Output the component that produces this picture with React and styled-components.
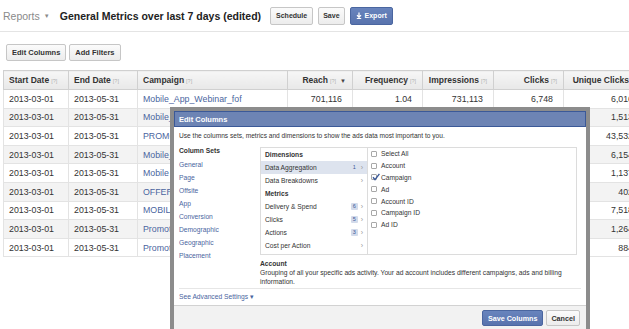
import React from 'react';
import styled, { createGlobalStyle } from 'styled-components';

const GlobalStyle = createGlobalStyle`
  html, body {
    margin: 0;
    padding: 0;
    background: #fff;
    overflow: hidden;
  }
  body {
    font-family: "Liberation Sans", Arial, sans-serif;
    color: #333;
  }
`;

const Page = styled.div`
  position: relative;
  width: 629px;
  height: 329px;
  overflow: hidden;
`;

const TopBar = styled.div`
  display: flex;
  align-items: center;
  height: 31px;
  padding-left: 3px;
  border-bottom: 1px solid #e4e4e4;
`;

const Reports = styled.span`
  font-size: 10.5px;
  color: #8a8a8a;
`;

const Caret = styled.span`
  font-size: 6px;
  color: #8a8a8a;
  margin-left: 4px;
`;

const Title = styled.h1`
  margin: 0 0 0 10px;
  font-size: 10.5px;
  font-weight: bold;
  color: #222;
`;

const Actions = styled.div`
  display: flex;
  gap: 5px;
  margin-left: 9px;
`;

const Button = styled.button`
  display: flex;
  align-items: center;
  gap: 3px;
  height: ${({ $h }) => $h || 18}px;
  padding: 0 ${({ $pad }) => $pad || 5}px;
  font-family: inherit;
  font-size: ${({ $size }) => $size || 7}px;
  font-weight: bold;
  border-radius: 2px;
  cursor: pointer;
  color: ${({ $primary }) => ($primary ? '#fff' : '#333')};
  border: 1px solid ${({ $primary }) => ($primary ? '#4a66a0' : '#c6c6c6')};
  background: ${({ $primary }) =>
    $primary
      ? 'linear-gradient(#6884bd, #5873ad)'
      : 'linear-gradient(#fbfbfb, #ececec)'};
`;

const Toolbar = styled.div`
  display: flex;
  gap: 3px;
  padding: 12px 0 0 6px;
`;

const Table = styled.table`
  margin: 9px 0 0 3px;
  width: 640px;
  table-layout: fixed;
  border-collapse: collapse;
`;

const Th = styled.th`
  height: 18px;
  padding: 0 ${({ $align }) => ($align === 'right' ? '6px' : '0')} 0
    ${({ $align }) => ($align === 'right' ? '0' : '5px')};
  font-size: 8.5px;
  font-weight: bold;
  color: #333;
  text-align: ${({ $align }) => $align || 'left'};
  white-space: nowrap;
  overflow: hidden;
  border: 1px solid #d0d0d0;
  background: linear-gradient(#f6f6f6, #e8e8e8);
`;

const Help = styled.span`
  font-size: 5.5px;
  font-weight: normal;
  color: #b0b0b0;
  margin-left: 2px;
`;

const Sort = styled.span`
  font-size: 6px;
  color: #444;
  margin-left: 4px;
`;

const Tr = styled.tr`
  background: ${({ $odd }) => ($odd ? '#f3f3f3' : '#fff')};
`;

const Td = styled.td`
  height: 17.6px;
  padding: 0 ${({ $align }) => ($align === 'right' ? '10px' : '0')} 0
    ${({ $align }) => ($align === 'right' ? '0' : '5px')};
  font-size: 8.8px;
  color: ${({ $link }) => ($link ? '#4a65a0' : '#333')};
  text-align: ${({ $align }) => $align || 'left'};
  white-space: nowrap;
  overflow: hidden;
  border: 1px solid #e3e3e3;
`;

const Dialog = styled.div`
  position: absolute;
  left: 170px;
  top: 107px;
  width: 420px;
  box-sizing: border-box;
  border: 4px solid rgba(70, 70, 70, 0.62);
  background: #fff;
  font-size: 6.7px;
  color: #333;
`;

const DialogHeader = styled.div`
  height: 16px;
  box-sizing: border-box;
  display: flex;
  align-items: center;
  padding-left: 4px;
  background: #6d84b4;
  border: 1px solid #3b5998;
  color: #fff;
  font-size: 7.5px;
  font-weight: bold;
`;

const DialogBody = styled.div`
  padding: 4px 5px 0 5px;
`;

const Intro = styled.p`
  margin: 0;
  line-height: 9px;
  font-size: 6.6px;
`;

const Columns = styled.div`
  display: grid;
  grid-template-columns: 81px 317px;
  margin-top: 7px;
`;

const SetsTitle = styled.div`
  font-weight: bold;
  line-height: 8px;
  margin-bottom: 3px;
`;

const SetLink = styled.div`
  line-height: 13px;
  color: #4a65a0;
`;

const Picker = styled.div`
  display: grid;
  grid-template-columns: 107px 1fr;
  height: 108px;
  box-sizing: border-box;
  border: 1px solid #dcdcdc;
`;

const MenuPane = styled.div`
  border-right: 1px solid #dcdcdc;
`;

const MenuRow = styled.div`
  display: flex;
  align-items: center;
  height: 13px;
  padding: 0 4px 0 4px;
  font-weight: ${({ $head }) => ($head ? 'bold' : 'normal')};
  background: ${({ $active }) => ($active ? '#dde3ee' : 'transparent')};
`;

const Badge = styled.span`
  margin-left: auto;
  min-width: 7px;
  height: 7px;
  line-height: 7px;
  text-align: center;
  font-size: 5.5px;
  border-radius: 1px;
  color: #3b5998;
  background: ${({ $plain }) => ($plain ? 'transparent' : '#d3dbeb')};
`;

const Chevron = styled.span`
  margin-left: ${({ $alone }) => ($alone ? 'auto' : '3px')};
  color: #999;
  font-size: 7px;
`;

const CheckPane = styled.div`
  padding-left: 3px;
`;

const CheckRow = styled.label`
  display: flex;
  align-items: center;
  height: 11.8px;
  gap: 4px;
`;

const Box = styled.span`
  position: relative;
  width: 6px;
  height: 6px;
  box-sizing: border-box;
  border: 1px solid #a8a8a8;
  border-radius: 1px;
  background: #fff;

  svg {
    position: absolute;
    left: 0;
    top: -2px;
  }
`;

const Description = styled.div`
  margin-top: 3.5px;
  line-height: 9px;

  strong {
    display: block;
  }
`;

const Advanced = styled.div`
  margin-top: 2.5px;
  border-top: 1px solid #e6e6e6;
  padding: 3px 0 4px 0;
  line-height: 9px;
  color: #4a65a0;
`;

const Footer = styled.div`
  display: flex;
  justify-content: flex-end;
  gap: 3px;
  height: 60px;
  padding: 4px 6px;
  background: #f2f2f2;
  border-top: 1px solid #d2d2d2;
`;

const ExportIcon = () => (
  <svg width="6" height="7" viewBox="0 0 6 7">
    <path d="M3 0.5V5M1 3.2L3 5.4L5 3.2M0.8 6.5H5.2" stroke="#fff" strokeWidth="1.2" fill="none" />
  </svg>
);

const Check = ({ checked }) => (
  <Box>
    {checked && (
      <svg width="8" height="8" viewBox="0 0 8 8">
        <path d="M1 4.2L3 6.6L7.4 0.8" stroke="#3b5998" strokeWidth="1.4" fill="none" />
      </svg>
    )}
  </Box>
);

const rows = [
  ['Mobile_App_Webinar_fof', '701,116', '1.04', '731,113', '6,748', '6,016'],
  ['Mobile_App_Install_fof', '152,401', '1.02', '155,870', '1,730', '1,513'],
  ['PROMO_Spring_Offers', '5,320,114', '1.21', '6,437,338', '48,206', '43,532'],
  ['Mobile_App_Retarget', '682,904', '1.05', '717,049', '6,911', '6,154'],
  ['Mobile App Engagement', '140,332', '1.03', '144,542', '1,262', '1,137'],
  ['OFFERS_Summer_Sale', '52,118', '1.01', '52,639', '451', '402'],
  ['MOBILE_Web_Offers', '890,271', '1.08', '961,493', '8,406', '7,518'],
  ['Promoted_Posts_April', '163,004', '1.04', '169,524', '1,410', '1,264'],
  ['Promoted_Posts_May', '98,722', '1.02', '100,696', '990', '884'],
];

const widths = [65, 69, 150, 65, 70, 71, 70, 80];

const sets = ['General', 'Page', 'Offsite', 'App', 'Conversion', 'Demographic', 'Geographic', 'Placement'];

const menu = [
  { label: 'Dimensions', head: true },
  { label: 'Data Aggregation', badge: '1', plain: true, active: true },
  { label: 'Data Breakdowns' },
  { label: 'Metrics', head: true },
  { label: 'Delivery & Spend', badge: '6' },
  { label: 'Clicks', badge: '5' },
  { label: 'Actions', badge: '3' },
  { label: 'Cost per Action' },
];

const checks = ['Select All', 'Account', 'Campaign', 'Ad', 'Account ID', 'Campaign ID', 'Ad ID'];

const App = () => (
  <Page>
    <GlobalStyle />
    <TopBar>
      <Reports>Reports</Reports>
      <Caret>▼</Caret>
      <Title>General Metrics over last 7 days (edited)</Title>
      <Actions>
        <Button>Schedule</Button>
        <Button $pad={4}>Save</Button>
        <Button $primary>
          <ExportIcon />
          Export
        </Button>
      </Actions>
    </TopBar>

    <Toolbar>
      <Button $h={17} $pad={5} $size={7.5}>Edit Columns</Button>
      <Button $h={17} $pad={5} $size={7.5}>Add Filters</Button>
    </Toolbar>

    <Table>
      <colgroup>
        {widths.map((w, i) => (
          <col key={i} style={{ width: w }} />
        ))}
      </colgroup>
      <thead>
        <tr>
          <Th>Start Date<Help>[?]</Help></Th>
          <Th>End Date<Help>[?]</Help></Th>
          <Th>Campaign<Help>[?]</Help></Th>
          <Th $align="right">Reach<Help>[?]</Help><Sort>▼</Sort></Th>
          <Th $align="right">Frequency<Help>[?]</Help></Th>
          <Th $align="right">Impressions<Help>[?]</Help></Th>
          <Th $align="right">Clicks<Help>[?]</Help></Th>
          <Th $align="right">Unique Clicks<Help>[?]</Help></Th>
        </tr>
      </thead>
      <tbody>
        {rows.map((r, i) => (
          <Tr key={i} $odd={i % 2 === 1}>
            <Td>2013-03-01</Td>
            <Td>2013-05-31</Td>
            <Td $link>{r[0]}</Td>
            <Td $align="right">{r[1]}</Td>
            <Td $align="right">{r[2]}</Td>
            <Td $align="right">{r[3]}</Td>
            <Td $align="right">{r[4]}</Td>
            <Td $align="right">{r[5]}</Td>
          </Tr>
        ))}
      </tbody>
    </Table>

    <Dialog>
      <DialogHeader>Edit Columns</DialogHeader>
      <DialogBody>
        <Intro>Use the columns sets, metrics and dimensions to show the ads data most important to you.</Intro>
        <Columns>
          <div>
            <SetsTitle>Column Sets</SetsTitle>
            {sets.map((s) => (
              <SetLink key={s}>{s}</SetLink>
            ))}
          </div>
          <div>
            <Picker>
              <MenuPane>
                {menu.map((m) => (
                  <MenuRow key={m.label} $head={m.head} $active={m.active}>
                    {m.label}
                    {m.badge && <Badge $plain={m.plain}>{m.badge}</Badge>}
                    {!m.head && <Chevron $alone={!m.badge}>›</Chevron>}
                  </MenuRow>
                ))}
              </MenuPane>
              <CheckPane>
                {checks.map((c) => (
                  <CheckRow key={c}>
                    <Check checked={c === 'Campaign'} />
                    {c}
                  </CheckRow>
                ))}
              </CheckPane>
            </Picker>
            <Description>
              <strong>Account</strong>
              Grouping of all your specific ads activity. Your ad account includes different campaigns, ads and billing
              information.
            </Description>
          </div>
        </Columns>
        <Advanced>See Advanced Settings ▾</Advanced>
      </DialogBody>
      <Footer>
        <Button $h={16} $pad={5} $size={7.2} $primary>Save Columns</Button>
        <Button $h={16} $pad={4} $size={7.2}>Cancel</Button>
      </Footer>
    </Dialog>
  </Page>
);

export default App;
